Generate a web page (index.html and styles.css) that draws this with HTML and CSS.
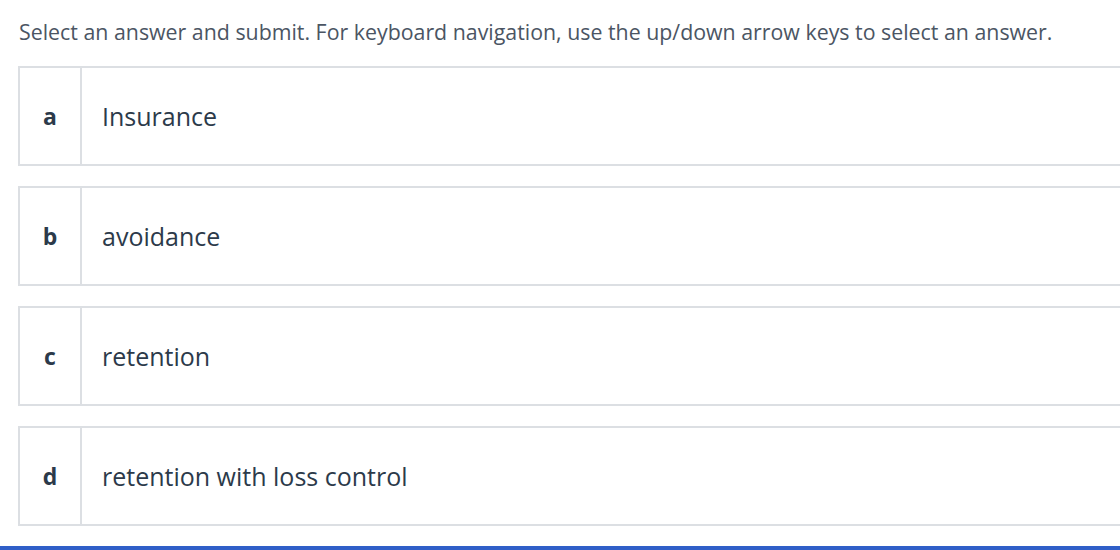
FILE: index.html
```html
<!DOCTYPE html>
<html>
<head>
<meta charset="utf-8">
<link rel="stylesheet" href="styles.css">
</head>
<body>
<div class="page">
  <p class="prompt">Select an answer and submit. For keyboard navigation, use the up/down arrow keys to select an answer.</p>
  <div class="options">
    <div class="option"><div class="letter">a</div><div class="text">Insurance</div></div>
    <div class="option"><div class="letter">b</div><div class="text">avoidance</div></div>
    <div class="option"><div class="letter">c</div><div class="text">retention</div></div>
    <div class="option"><div class="letter">d</div><div class="text">retention with loss control</div></div>
  </div>
</div>
<div class="bar"></div>
</body>
</html>
```
FILE: styles.css
```css
html, body {
  margin: 0;
  padding: 0;
  background: #fff;
  overflow: hidden;
  width: 1120px;
  height: 550px;
}
.page {
  padding: 18px 0 0 18px;
  font-family: "Open Sans", "Noto Sans", sans-serif;
  height: 528px;
  overflow: hidden;
}
.prompt {
  margin: 0 0 0 1px;
  font-size: 21.35px;
  line-height: 28px;
  color: #4b5563;
  white-space: nowrap;
}
.options {
  margin-top: 20px;
  display: flex;
  flex-direction: column;
  gap: 20px;
  width: 1200px;
}
.option {
  display: flex;
  height: 96px;
  border: 2px solid #dcdfe3;
}
.letter {
  width: 60px;
  border-right: 2px solid #dcdfe3;
  display: flex;
  align-items: center;
  justify-content: center;
  font-weight: 700;
  font-size: 23px;
  color: #2c3a4a;
}
.text {
  display: flex;
  align-items: center;
  padding-left: 20px;
  font-size: 25px;
  color: #2c3a4a;
}
.bar {
  height: 4px;
  background: #2f5fc8;
}
```
